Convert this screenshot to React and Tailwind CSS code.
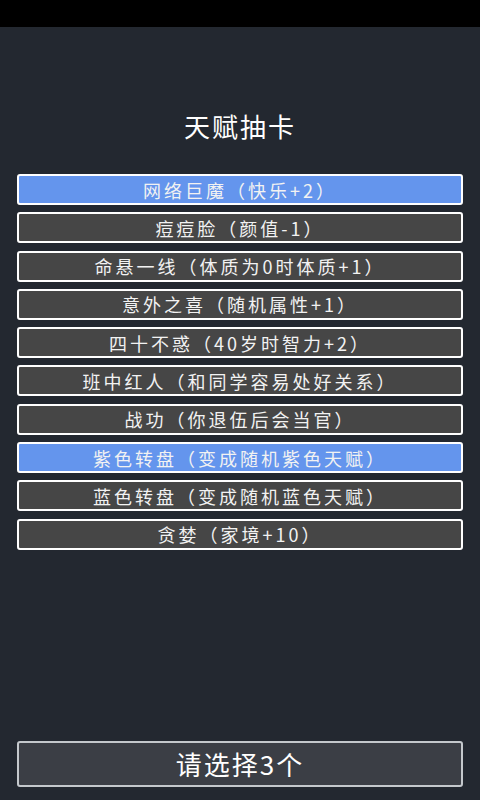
import React from 'react'

const talents = [
  { text: '网络巨魔（快乐+2）', selected: true },
  { text: '痘痘脸（颜值-1）', selected: false },
  { text: '命悬一线（体质为0时体质+1）', selected: false },
  { text: '意外之喜（随机属性+1）', selected: false },
  { text: '四十不惑（40岁时智力+2）', selected: false },
  { text: '班中红人（和同学容易处好关系）', selected: false },
  { text: '战功（你退伍后会当官）', selected: false },
  { text: '紫色转盘（变成随机紫色天赋）', selected: true },
  { text: '蓝色转盘（变成随机蓝色天赋）', selected: false },
  { text: '贪婪（家境+10）', selected: false },
]

export default function App() {
  return (
    <div
      className="w-[480px] h-[800px] flex flex-col bg-[#232830] text-white"
      style={{ fontFamily: '"Noto Sans CJK SC", "Liberation Sans", sans-serif' }}
    >
      {/* 状态栏 */}
      <div className="h-[27px] bg-black shrink-0"></div>

      {/* 标题 */}
      <div className="pt-[84px] pb-[33px] text-center text-[26px] leading-[30px] tracking-[2px]">天赋抽卡</div>

      {/* 天赋列表 */}
      <div className="flex flex-col gap-[7.3px] px-[17px]">
        {talents.map((t) => (
          <button
            type="button"
            key={t.text}
            className={
              t.selected
                ? 'h-[31px] rounded-[3px] border-2 border-white bg-[#6495ed] text-[18px] leading-none tracking-[3px] text-[#f2f2f2]'
                : 'h-[31px] rounded-[3px] border-2 border-white bg-[#464646] text-[18px] leading-none tracking-[3px] text-[#f2f2f2]'
            }
          >
            {t.text}
          </button>
        ))}
      </div>

      <div className="flex-1"></div>

      {/* 底部按钮 */}
      <div className="px-[17px] pb-[13px]">
        <button
          type="button"
          className="w-full h-[46px] rounded-[3px] border-2 border-[#c4c8cc] bg-[#3b3e45] text-[26px] leading-none tracking-[2px] text-white"
        >
          请选择3个
        </button>
      </div>
    </div>
  )
}
